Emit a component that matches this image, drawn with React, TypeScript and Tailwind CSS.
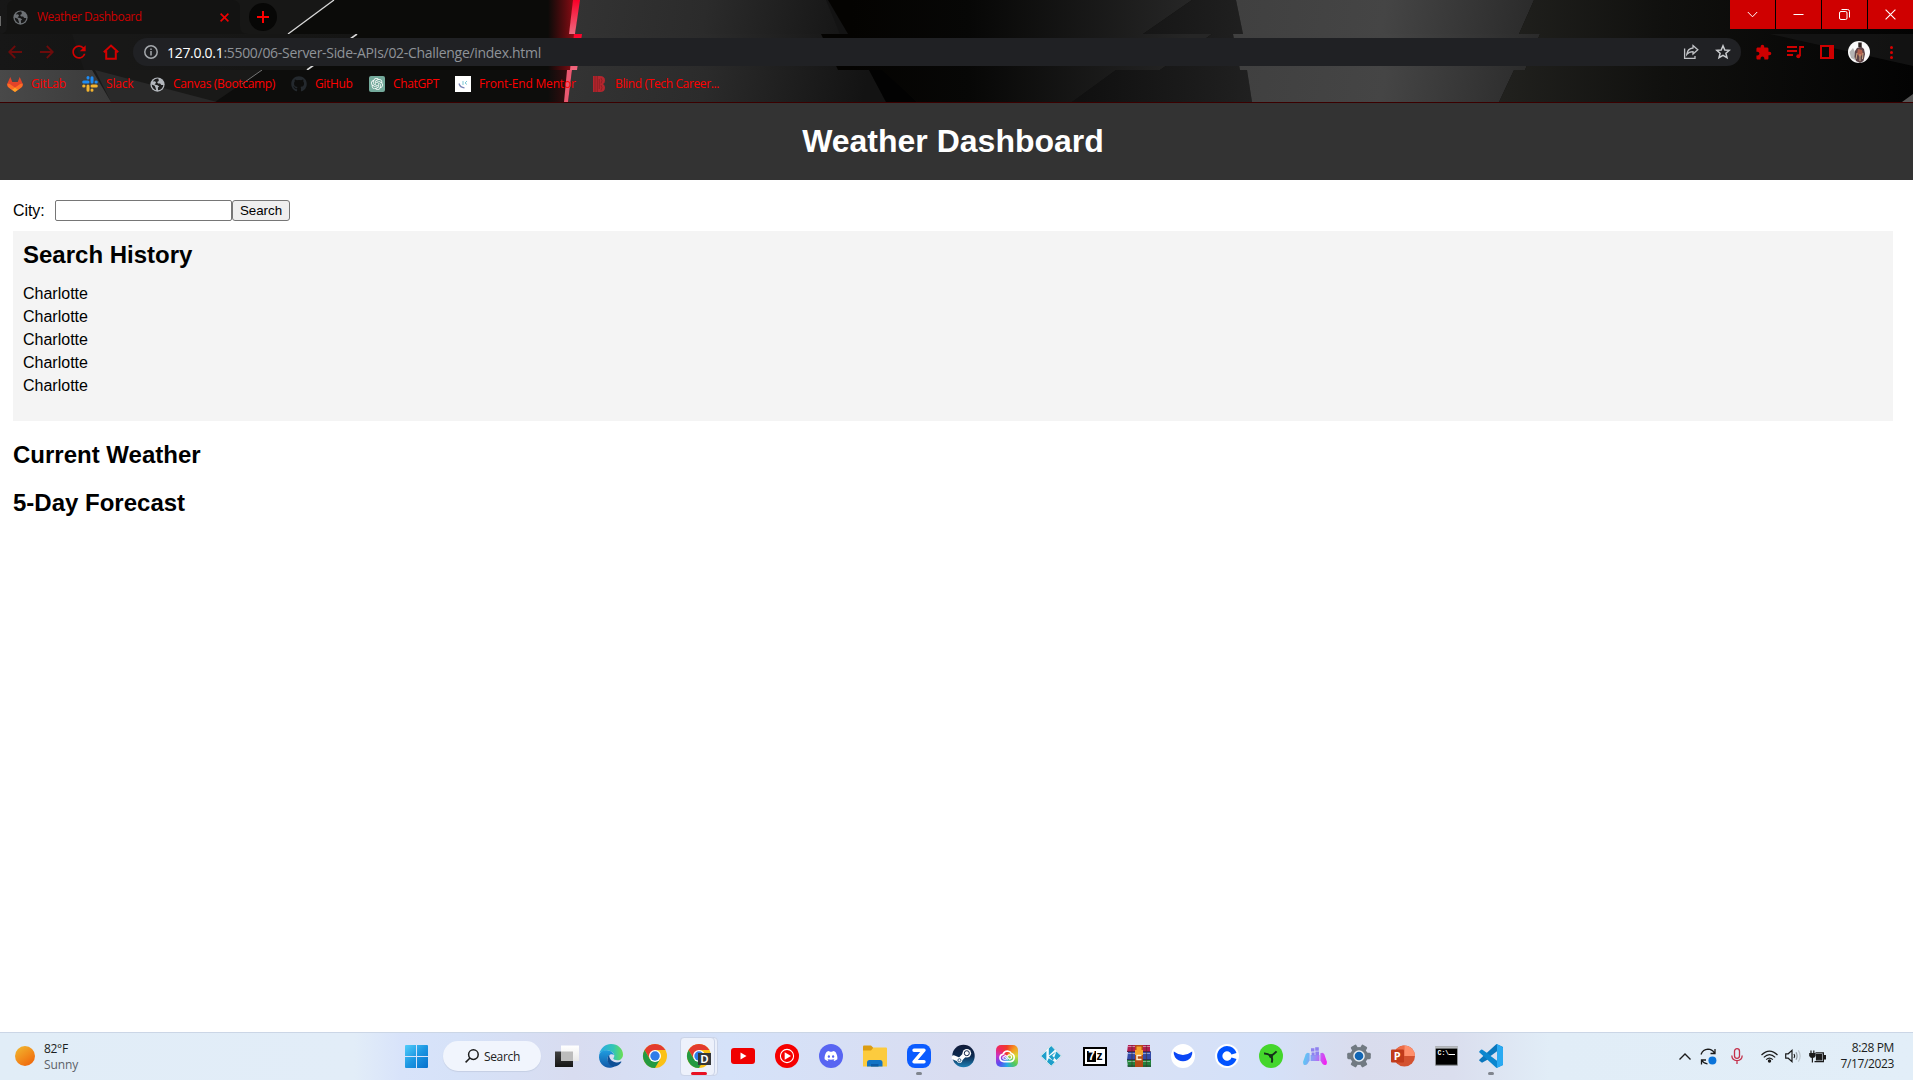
import React from 'react';
import { FaDiscord, FaGithub } from 'react-icons/fa';
import { SiOpenai } from 'react-icons/si';
import { MdExtension, MdRefresh } from 'react-icons/md';

const SEGOE = "font-['Open_Sans','Noto_Sans',sans-serif]";

function Art({ h, children }: { h: number; children: React.ReactNode }) {
  return (
    <svg className="absolute inset-0 h-full w-full" viewBox={`0 0 1913 ${h}`} preserveAspectRatio="none">
      {children}
    </svg>
  );
}

function Gradients() {
  return (
    <svg className="absolute h-0 w-0">
      <defs>
        <linearGradient id="base" gradientUnits="userSpaceOnUse" x1="0" y1="0" x2="1913" y2="0">
          <stop offset="0" stopColor="#171717" />
          <stop offset=".13" stopColor="#11110f" />
          <stop offset=".29" stopColor="#0b0b09" />
        </linearGradient>
        <linearGradient id="glow" gradientUnits="userSpaceOnUse" x1="548" y1="0" x2="574" y2="0">
          <stop offset="0" stopColor="#7a0a10" stopOpacity="0" />
          <stop offset="1" stopColor="#8c0c14" />
        </linearGradient>
        <linearGradient id="streak" x1="0" y1="0" x2="0" y2="1">
          <stop offset="0" stopColor="#fa0028" />
          <stop offset="1" stopColor="#ee6a80" />
        </linearGradient>
        <linearGradient id="mid" gradientUnits="userSpaceOnUse" x1="575" y1="0" x2="860" y2="50">
          <stop offset="0" stopColor="#333333" />
          <stop offset=".45" stopColor="#2b2b2b" />
          <stop offset="1" stopColor="#131313" />
        </linearGradient>
        <linearGradient id="facet" gradientUnits="userSpaceOnUse" x1="850" y1="0" x2="1190" y2="0">
          <stop offset="0" stopColor="#040301" />
          <stop offset=".35" stopColor="#070706" />
          <stop offset="1" stopColor="#262626" />
        </linearGradient>
        <linearGradient id="dark" gradientUnits="userSpaceOnUse" x1="1080" y1="0" x2="1250" y2="0">
          <stop offset="0" stopColor="#101010" />
          <stop offset="1" stopColor="#202020" />
        </linearGradient>
        <linearGradient id="gray" gradientUnits="userSpaceOnUse" x1="1236" y1="0" x2="1530" y2="40">
          <stop offset="0" stopColor="#404040" />
          <stop offset=".5" stopColor="#454545" />
          <stop offset="1" stopColor="#2b2b2b" />
        </linearGradient>
        <linearGradient id="right" gradientUnits="userSpaceOnUse" x1="1500" y1="0" x2="1913" y2="0">
          <stop offset="0" stopColor="#21211e" />
          <stop offset=".4" stopColor="#10100e" />
          <stop offset="1" stopColor="#030303" />
        </linearGradient>
        <linearGradient id="left" gradientUnits="userSpaceOnUse" x1="0" y1="0" x2="111" y2="0">
          <stop offset="0" stopColor="#494949" />
          <stop offset="1" stopColor="#3a3a3a" />
        </linearGradient>
      </defs>
    </svg>
  );
}

function TabArt() {
  return (
    <Art h={34}>
      <path fill="url(#base)" d="M0 0H1913V34H0z" />
      <path fill="#171716" d="M72 0H334L288 34H84z" />
      <path fill="#131312" d="M0 34Q7 34 7 26V8Q7 0 15 0H232Q240 0 240 8V26Q240 34 248 34z" opacity=".85" />
      <path fill="#0b0b09" d="M334 0H580V34H288z" />
      <path fill="#6b6b6b" d="M0 16h1v10H0z" />
      <path stroke="#d8d8d8" strokeWidth="1.3" d="M334 0L288 34" />
      <path fill="url(#glow)" d="M548 0H575L571 34H548z" />
      <path fill="url(#mid)" d="M579 0H830L846 34H575z" />
      <path fill="#131313" d="M826 0H840L862 34H840z" />
      <path fill="url(#streak)" d="M573 0H580L575 34H569z" />
      <path fill="url(#facet)" d="M828 0H1192L1143 34H848z" />
      <path fill="url(#dark)" d="M1192 0H1236L1243 34H1143z" />
      <path fill="url(#gray)" d="M1236 0H1534L1519 34H1243z" />
      <path fill="url(#right)" d="M1534 0H1913V34H1519z" />
    </Art>
  );
}

function ToolbarArt() {
  return (
    <Art h={36}>
      <path fill="url(#base)" d="M0 0H1913V36H0z" />
      <path fill="#1c1c1b" d="M72 0H356L307 36H84z" opacity=".5" />
      <path fill="#0b0b09" d="M356 0H580V36H307z" />
      <path stroke="#d8d8d8" strokeWidth="1.6" d="M357 0L307 36" />
      <path fill="url(#glow)" d="M548 0H577V36H548z" />
      <path fill="url(#mid)" d="M580 0H829L850 36H576z" />
      <path fill="url(#streak)" d="M574 0H582L577 36H570z" />
      <path fill="url(#facet)" d="M821 0H1212L1160 36H838z" />
      <path fill="url(#dark)" d="M1212 0H1233L1240 36H1160z" />
      <path fill="url(#gray)" d="M1233 0H1540L1525 36H1240z" />
      <path fill="url(#right)" d="M1540 0H1913V36H1525z" />
      <path fill="#161616" d="M1770 0H1913V32z" opacity=".8" />
    </Art>
  );
}

function BookmarkArt() {
  return (
    <Art h={32}>
      <path fill="#0d0d0c" d="M0 0H1913V32H0z" />
      <path fill="#191918" d="M90 0H262L215 32H110z" />
      <path fill="#292929" d="M95 0L217 32H111z" />
      <path fill="url(#left)" d="M0 0H92L111 32H0z" />
      <path stroke="#777" d="M262 0L242 14" />
      <path fill="url(#glow)" d="M548 0H569L565 32H548z" opacity=".45" />
      <path fill="url(#mid)" d="M572 0H869L886 32H568z" />
      <path fill="#ea5870" d="M567 0H572L568 32H564z" />
      <path fill="#020202" d="M869 0H884L917 32H886z" />
      <path fill="url(#facet)" d="M882 0H1116L1072 32H917z" />
      <path fill="url(#dark)" d="M1116 0H1247L1252 32H1072z" />
      <path fill="url(#gray)" d="M1247 0H1514L1499 32H1252z" />
      <path fill="url(#right)" d="M1514 0H1913V32H1499z" />
      <path fill="#555" d="M1902 32L1913 24V32z" />
    </Art>
  );
}

function Globe({ color, hole }: { color: string; hole: string }) {
  return (
    <svg viewBox="0 0 16 16" className="h-[15px] w-[15px]">
      <circle cx="8" cy="8" r="7.6" fill={color} />
      <path fill={hole} d="M9 1.8C7 1.4 4.2 2.5 3 4.8L5.4 4.5 6.5 6 4.8 8 8 8.8 9.8 10 8.4 11.3 8.6 14.2C12 13.8 14 11.3 14.2 8.6L12 8.4 10.8 6.8 8.6 7 7.6 5.2 9.4 4.2z" />
      <path fill={hole} d="M1.8 8L5 9.4 6 11.6 6.6 14C4 13.4 2 11 1.8 8z" />
    </svg>
  );
}

function TabStrip() {
  const btn = 'flex h-[29px] w-[45px] items-center justify-center bg-[#cf0000] pr-px';
  const ic = 'h-[11px] w-[11px] fill-none stroke-white';
  return (
    <div className="relative h-[34px] overflow-hidden">
      <TabArt />
      <div className="relative flex h-full">
        <div className="flex h-full w-[240px] items-center pl-[13px] pr-[10px]">
          <Globe color="#6d7175" hole="#171717" />
          <span className="ml-[9px] flex-1 whitespace-nowrap text-[12px] leading-4 tracking-[-0.48px] text-[#cc0000]">Weather Dashboard</span>
          <svg viewBox="0 0 9 9" className="mr-px h-[9px] w-[9px] stroke-[#f00000]" strokeWidth="1.6">
            <path d="M.6 .6L8.4 8.4M8.4 .6L.6 8.4" />
          </svg>
        </div>
        <div className="ml-[9px] mt-[3px] flex h-7 w-7 items-center justify-center rounded-full bg-[#070706]">
          <svg viewBox="0 0 12 12" className="h-3 w-3 stroke-[#ff0000]" strokeWidth="2">
            <path d="M6 0V12M0 6H12" />
          </svg>
        </div>
        <div className="ml-auto flex h-[29px] gap-px bg-black">
          <div className={btn}><svg viewBox="0 0 11 11" className={ic}><path d="M.8 3L5.5 7.8 10.2 3" /></svg></div>
          <div className={btn}><svg viewBox="0 0 11 11" className={ic}><path d="M.5 5.5H10.5" /></svg></div>
          <div className={btn}>
            <svg viewBox="0 0 11 11" className={ic}>
              <rect x=".5" y="2.5" width="7.5" height="8" rx="1.5" />
              <path d="M2.5 .5H8.5Q10.5 .5 10.5 2.5V8.5" />
            </svg>
          </div>
          <div className={btn}><svg viewBox="0 0 11 11" className={ic} strokeWidth="1.1"><path d="M.6 .6L10.4 10.4M10.4 .6L.6 10.4" /></svg></div>
        </div>
      </div>
    </div>
  );
}

function Toolbar() {
  return (
    <div className="relative h-9">
      <ToolbarArt />
      <div className="relative flex h-full items-center">
        <div className="flex w-[133px] items-center gap-[18px] pl-2">
          <svg viewBox="0 0 14 14" className="h-[14px] w-[14px] fill-none stroke-[#6d0b0b]" strokeWidth="1.8"><path d="M14 7H1.5M7.2 1L1.2 7 7.2 13" /></svg>
          <svg viewBox="0 0 14 14" className="h-[14px] w-[14px] fill-none stroke-[#6d0b0b]" strokeWidth="1.8"><path d="M0 7H12.5M6.8 1L12.8 7 6.8 13" /></svg>
          <MdRefresh className="-mx-[3px] h-5 w-5 text-[#d40000]" />
          <svg viewBox="0 0 16 16" className="-mx-px h-4 w-4 fill-none stroke-[#d40000]" strokeWidth="2"><path d="M.8 8.2L8 1.6 15.2 8.2M3.2 7V14.8H12.8V7" /></svg>
        </div>
        <div className="flex h-7 w-[1608px] items-center rounded-full bg-[#202124] pl-[11px] pr-[10px]">
          <svg viewBox="0 0 14 14" className="h-[14px] w-[14px] fill-none stroke-[#a4a8ac]" strokeWidth="1.5"><circle cx="7" cy="7" r="6.2" /><path d="M7 6V10.4M7 3.4V5" /></svg>
          <span className="ml-[9px] flex-1 whitespace-nowrap pt-px text-[14px] leading-5 tracking-[-0.3px] text-[#8f9398]">
            <span className="text-white">127.0.0.1</span>:5500/06-Server-Side-APIs/02-Challenge/index.html
          </span>
          <svg viewBox="0 0 16 16" className="mr-4 h-4 w-4 fill-none stroke-[#c0c2c5]" strokeWidth="1.3">
            <path d="M1.6 4.5V14.4H12V12M10 1.6L14.8 5.8 10 10V7.6C7.5 7.6 5.4 8.2 3.8 10.4 4.2 6.8 6.4 4.4 10 4z" />
          </svg>
          <svg viewBox="0 0 16 16" className="h-4 w-4 fill-none stroke-[#c9cbce]" strokeWidth="1.5">
            <path d="M8 1.8L9.8 6 14.3 6.3 10.9 9.2 12 13.7 8 11.3 4 13.7 5.1 9.2 1.7 6.3 6.2 6z" />
          </svg>
        </div>
        <MdExtension className="ml-[14px] h-[17px] w-[17px] text-[#cf0000]" />
        <svg viewBox="0 0 17 14" className="ml-[15px] h-[14px] w-[17px] fill-none stroke-[#cf0000]" strokeWidth="1.8">
          <path d="M0 2H10M0 6H10M0 10H6M13 11V2H17" />
          <circle cx="11.3" cy="11.2" r="2" fill="#cf0000" stroke="none" />
        </svg>
        <div className="ml-4 h-[14px] w-[14px] border-2 border-r-[5px] border-[#cf0000]" />
        <svg viewBox="0 0 22 22" className="ml-[14px] h-[22px] w-[22px]">
          <circle cx="11" cy="11" r="11" fill="#fafafa" />
          <path fill="#b5b5b5" d="M1.5 11L5 7 8 13 7 19 3 17z" />
          <path fill="#5d4347" d="M9 7L13 5.5 16 8 17 13 15.5 20 12 22 8 20 6.5 16 7 10z" />
          <path fill="#b0604c" d="M10 8L14 9 15 13 12 16 9 13z" />
          <path stroke="#d8b88f" strokeWidth=".9" d="M9 12L8 18M12 13V20M15 12L14.5 18" />
          <path fill="#2b2220" d="M10.3 1.5h3.4v4.5h-3.4z" />
        </svg>
        <div className="ml-5 flex flex-col gap-[2px]">
          <i className="h-[3px] w-[3px] rounded-full bg-[#d80000]" />
          <i className="h-[3px] w-[3px] rounded-full bg-[#d80000]" />
          <i className="h-[3px] w-[3px] rounded-full bg-[#d80000]" />
        </div>
      </div>
    </div>
  );
}

function GitLab() {
  return (
    <svg viewBox="0 0 16 16" className="h-4 w-4">
      <path fill="#e24329" d="M3.3 1L5.3 6H10.7L12.7 1 15.6 7.6Q16.3 10 14 11.7L8 16 2 11.7Q-.3 10 .4 7.6z" />
      <path fill="#fc6d26" d="M.5 7.4Q3 7.6 5 9.4L11.2 13.8 8 16 2 11.7Q-.3 10 .5 7.4zM15.5 7.4Q13 7.6 11 9.4L4.8 13.8 8 16 14 11.7Q16.3 10 15.5 7.4z" />
      <path fill="#fca326" d="M8 11.6L11.2 13.8 8 16 4.8 13.8z" />
    </svg>
  );
}

function Slack() {
  return (
    <svg viewBox="0 0 16 16" className="h-4 w-4 fill-none" strokeWidth="3" strokeLinecap="round">
      <path stroke="#1e8cf5" d="M6 1.6V2M1.7 6H6M10 1.8V6M14 6H14.3" />
      <path stroke="#f5b52e" d="M1.7 10H2M6 10V14.2M10 10H14.3M10 14V14.3" />
    </svg>
  );
}

function Mentor() {
  return (
    <svg viewBox="0 0 16 16" className="h-4 w-4 bg-white fill-none">
      <path stroke="#7b86b8" strokeWidth="1.3" d="M4 7.5Q5 11.5 9.5 11.8" />
      <path stroke="#7fc9d6" d="M8 5V9M12 5L10 7 12 8.5" />
    </svg>
  );
}

function Blind() {
  return (
    <svg viewBox="0 0 12 16" className="h-4 w-3">
      <path fill="#b3262e" d="M0 0H7Q12 0 12 4.5 12 7 10 8 12 9 12 11.5 12 16 7 16H0z" />
      <path stroke="#6b161b" strokeWidth=".5" fill="none" d="M2 0V16M4.3 0V16M6.3 3V13M8 2Q10 4.5 8 7.5M8 9Q10 11.5 8 14.5" />
    </svg>
  );
}

function BookmarkBar() {
  const items = [
    { icon: <GitLab />, label: 'GitLab', w: 'w-[75px] gap-2', t: 'tracking-[-0.25px]' },
    { icon: <Slack />, label: 'Slack', w: 'w-[68px] gap-2', t: 'tracking-[-0.2px]' },
    { icon: <Globe color="#b4b8bd" hole="#1d1d1d" />, label: 'Canvas (Bootcamp)', w: 'w-[141px] gap-2', t: 'tracking-[-0.32px]' },
    { icon: <FaGithub className="h-4 w-4 text-[#24292e]" />, label: 'GitHub', w: 'w-[78px] gap-2', t: 'tracking-[-0.35px]' },
    { icon: <div className="flex h-4 w-4 items-center justify-center rounded-[2px] bg-[#74aa9c]"><SiOpenai className="h-3 w-3 text-white" /></div>, label: 'ChatGPT', w: 'w-[86px] gap-2', t: 'tracking-[-0.35px]' },
    { icon: <Mentor />, label: 'Front-End Mentor', w: 'w-[138px] gap-2', t: 'tracking-[-0.18px]' },
    { icon: <Blind />, label: 'Blind (Tech Career...', w: 'w-[140px] gap-[10px]', t: 'tracking-[-0.36px]' },
  ];
  return (
    <div className="relative h-8">
      <BookmarkArt />
      <div className="relative flex h-[28px] items-center pl-[7px]">
        {items.map((b) => (
          <div key={b.label} className={`flex shrink-0 items-center ${b.w}`}>
            {b.icon}
            <span className={`whitespace-nowrap text-[12px] leading-4 text-[#ff0000] ${b.t}`}>{b.label}</span>
          </div>
        ))}
      </div>
    </div>
  );
}

function Page() {
  const h2 = 'text-[24px] font-bold leading-[27px]';
  return (
    <main className="flex-1 bg-white font-['Liberation_Sans',Arial,sans-serif] text-black">
      <header className="h-[77px] bg-[#333333] pr-[7px] pt-5 text-center">
        <h1 className="text-[32px] font-bold leading-[36px] text-white">Weather Dashboard</h1>
      </header>
      <section className="pl-[13px] pr-5 pt-5">
        <form className="flex h-[21px] items-center" onSubmit={(e) => e.preventDefault()}>
          <label htmlFor="city" className="w-[42px] text-[16px] leading-[18px] tracking-[-0.1px]">City:</label>
          <input id="city" className="h-[21px] w-[177px] rounded-[2px] border border-[#767676] bg-white px-1 text-[13px]" />
          <button className="h-[21px] w-[58px] rounded-[3px] border border-[#767676] bg-[#efefef] text-[13.33px] leading-[19px]">Search</button>
        </form>
        <div className="mt-[10px] h-[190px] bg-[#f4f4f4] p-[10px]">
          <h2 className={h2}>Search History</h2>
          <ul className="mt-[17px] flex flex-col gap-[5px] text-[16px] leading-[18px]">
            {[0, 1, 2, 3, 4].map((i) => <li key={i}>Charlotte</li>)}
          </ul>
        </div>
        <h2 className={`mt-5 ${h2}`}>Current Weather</h2>
        <h2 className={`mt-[21px] ${h2}`}>5-Day Forecast</h2>
      </section>
    </main>
  );
}

const S = 'h-6 w-6 overflow-visible';

function Chrome({ badge }: { badge?: boolean }) {
  return (
    <div className="relative h-6 w-6">
      <svg viewBox="0 0 24 24" className={S}>
        <circle cx="12" cy="12" r="12" fill="#fbc116" />
        <path fill="#e33b2e" d="M1.6 6A12 12 0 0 1 22.4 6H12L7 15z" />
        <path fill="#249a41" d="M1.6 6A12 12 0 0 0 12 24L17.2 15 12 12 6.8 15z" />
        <circle cx="12" cy="12" r="6" fill="#fff" />
        <circle cx="12" cy="12" r="4.7" fill="#2f7de9" />
      </svg>
      {badge && <div className="absolute left-[11px] top-[9px] flex h-3 w-[13px] items-center justify-center bg-[#343638] font-['Liberation_Sans',sans-serif] text-[11px] font-bold leading-3 text-white">D</div>}
    </div>
  );
}

const Start = () => (
  <svg viewBox="0 0 23 23" className="mr-px h-[23px] w-[23px]">
    <defs><linearGradient id="win" x1="0" y1="0" x2="23" y2="23" gradientUnits="userSpaceOnUse"><stop stopColor="#50cdfb" /><stop offset=".5" stopColor="#1c96e2" /><stop offset="1" stopColor="#0670cc" /></linearGradient></defs>
    <path fill="url(#win)" d="M1 0H11V11H0V1Q0 0 1 0zM12 0H22Q23 0 23 1V11H12zM0 12H11V23H1Q0 23 0 22zM12 12H23V22Q23 23 22 23H12z" />
  </svg>
);
const TaskView = () => (
  <svg viewBox="0 0 24 24" className={S}>
    <defs>
      <linearGradient id="tv1" x2="0" y2="1"><stop stopColor="#404040" /><stop offset="1" stopColor="#161616" /></linearGradient>
      <linearGradient id="tv2" x2="0" y2="1"><stop stopColor="#ffffff" /><stop offset="1" stopColor="#e9e9e9" /></linearGradient>
    </defs>
    <path fill="url(#tv1)" d="M0 7.5H18V23H0z" />
    <path fill="url(#tv2)" d="M6 1.5H24V17H6z" />
    <path fill="#bcbcbc" d="M6 7.5H18V17H6z" />
  </svg>
);
const Edge = () => (
  <svg viewBox="0 0 24 24" className={S}>
    <defs>
      <linearGradient id="ed1"><stop stopColor="#29a8e6" /><stop offset=".6" stopColor="#32c6b4" /><stop offset="1" stopColor="#6bdf50" /></linearGradient>
      <linearGradient id="ed2" x2="0" y2="1"><stop stopColor="#1f9de0" /><stop offset="1" stopColor="#1159a8" /></linearGradient>
    </defs>
    <path fill="url(#ed1)" d="M.3 10C1.5 4 6.5 0 12 0 19 0 24 5 24 10.5 24 14 21.5 16.3 18.5 16.3 16 16.3 14.3 15.4 14.3 14.6 14.3 14 15.3 13.4 15.3 11.6 15 8.5 11.5 6.5 8 6.5 4.5 6.5 1.5 8 .3 10z" />
    <path fill="url(#ed2)" d="M.2 10.5C1.5 7.4 5 6 8 6.3 12 6.6 14.6 9 15 11 11.5 9 8 12 8.5 15.8 9 19.5 12 22 15.6 22.2 8 27 -1.5 20 .2 10.5z" />
    <path fill="#0d4f96" d="M10.3 10.6C7 14 8 21 14 22.7 18 22.8 21 20.2 22.4 18 22.6 17.5 22.2 17.2 21.7 17.5 16.5 20 9.5 17 10.3 10.6z" />
  </svg>
);
const YouTube = () => (
  <svg viewBox="0 0 24 16" className="h-4 w-6"><rect width="24" height="16" rx="3" fill="#f00000" /><path fill="#fff" d="M9.5 4.5L15.5 8 9.5 11.5z" /></svg>
);
const YTMusic = () => (
  <svg viewBox="0 0 24 24" className={S}><circle cx="12" cy="12" r="12" fill="#f60000" /><circle cx="12" cy="12" r="6.6" fill="none" stroke="#fff" strokeWidth="1.1" /><path fill="#fff" d="M9.7 8.3L16 12 9.7 15.7z" /></svg>
);
const Discord = () => (
  <div className="flex h-6 w-6 items-center justify-center rounded-full bg-[#5865f2]"><FaDiscord className="h-[14px] w-[14px] text-white" /></div>
);
const Folder = () => (
  <svg viewBox="0 0 24 24" className={S}>
    <path fill="#dc9d12" d="M0 2.5Q0 1.5 1 1.5H8L10.5 4 9 8H0z" />
    <path fill="#fccb3e" d="M0 6.5H8L10.5 3.5H23Q24 3.5 24 4.5V22.5H0z" />
    <path fill="#1474c4" d="M4 22.5V18.5Q4 16 6.5 16H17Q19.5 16 19.5 18.5V22.5z" />
    <path fill="#0d5ca6" d="M8 20H15.5V22.5H8z" />
  </svg>
);
const Zoom = () => (
  <svg viewBox="0 0 24 24" className={S}><rect width="24" height="24" rx="8" fill="#0b5cff" /><path fill="none" stroke="#fff" strokeWidth="3.4" strokeLinejoin="round" strokeLinecap="round" d="M7 6.2H17L7 17.8H17" /></svg>
);
const Steam = () => (
  <svg viewBox="0 0 24 24" className={S}>
    <defs><linearGradient id="stm" x2="0" y2="1"><stop stopColor="#101a38" /><stop offset=".5" stopColor="#0d2a50" /><stop offset="1" stopColor="#1c7fb5" /></linearGradient></defs>
    <circle cx="12.5" cy="12" r="11.2" fill="url(#stm)" />
    <path stroke="#fff" strokeWidth="4.4" strokeLinecap="round" d="M2.8 13.5L8.6 16 L14 10.5" fill="none" />
    <circle cx="8.6" cy="16.2" r="2.6" fill="#fff" /><circle cx="8.4" cy="16.2" r="1.5" fill="none" stroke="#17406a" strokeWidth=".8" />
    <circle cx="15.8" cy="9.2" r="4.3" fill="#fff" /><circle cx="15.8" cy="9.2" r="2.5" fill="#fff" stroke="#13274a" strokeWidth="1" />
  </svg>
);
const Creative = () => (
  <div className="flex h-[22px] w-[22px] items-center justify-center rounded-[5px] bg-[conic-gradient(from_45deg,#f59a20,#d6d93a,#54c95a,#25a9e6,#5a4df0,#c832c8,#f0285a,#f03c28,#f59a20)]">
    <svg viewBox="0 0 16 13" className="h-[13px] w-4 fill-none stroke-white" strokeWidth="1.6" strokeLinecap="round">
      <path d="M4 4.2Q5.2 1 8.6 1 11.4 1.2 12.4 3.6 15.2 4.4 15.2 7.6 15 11 11.6 11.6H5Q1.2 11.4 .9 7.9 .9 4.6 4 4.2" />
      <path d="M8.4 9.2L6.4 7.2Q5 6 4 7.2 3.4 9 5 9.2H7M8.4 6L10 4.8Q12.4 4.6 12.6 7 12.4 9.2 10.4 9.2L8 6.6Q7 5.2 5.6 5" strokeWidth="1.1" />
    </svg>
  </div>
);
const Kodi = () => (
  <svg viewBox="0 0 24 24" className={S}>
    <path fill="#f4fafc" stroke="#b9cbd5" strokeWidth=".5" d="M12 .8L22.8 11.8 12 23 1.2 11.8z" />
    <path fill="#1f9fcb" d="M12.2 2L15.8 5.7 9.8 11.4V4.4zM7.4 7V17L2.2 12zM9.8 12.6L14 16.8 17.4 7.4 21.8 11.8 17.5 16 13.2 11.8 17.4 7.4zM9.8 14.2L15.8 18 12.2 21.8 8 17.8z" />
  </svg>
);
const SevenZip = () => (
  <div className="flex h-[19px] w-6 items-stretch border-2 border-black bg-white p-[2px] font-['Liberation_Sans',sans-serif] font-bold">
    <span className="flex w-[9px] items-center justify-center bg-black text-[12px] leading-none text-white">7</span>
    <span className="flex flex-1 items-end justify-center text-[12px] leading-[11px] text-black">z</span>
  </div>
);
const WinRar = () => (
  <svg viewBox="0 0 24 24" className={S}>
    <path fill="#b31c50" d="M1 1H23V8H0z" /><path fill="#324aa8" d="M1 8H24V16H0z" /><path fill="#23823c" d="M0 16H24V23H1z" />
    <path stroke="#fff" opacity=".45" d="M1 2.5H23M1 9.5H23M1 17.5H23" /><path stroke="#271a38" opacity=".6" d="M0 7.5H24M0 15.5H24M0 22H24" />
    <path fill="#b54a16" d="M8 1H16V23H8z" /><path fill="#f5a52b" d="M9.5 2.5H14.5V6H16V11H8V6H9.5z" />
    <path fill="none" stroke="#fff2cf" strokeWidth="1.5" d="M14.5 11.5H10V15.5H14.5" />
    <path stroke="#4a3024" strokeWidth="1.2" d="M5 1V23M19.5 1V23" opacity=".5" />
  </svg>
);
const Crescent = () => (
  <svg viewBox="0 0 24 24" className={S}><circle cx="12" cy="12" r="12" fill="#fff" /><path fill="#0a46f5" d="M2.8 7.5Q12 14.5 21.2 7.5 21.8 10.5 20 13.2 17 17.2 12 17.2 7 17.2 4 13.2 2.2 10.5 2.8 7.5z" /></svg>
);
const Coinbase = () => (
  <svg viewBox="0 0 24 24" className={S}><circle cx="12" cy="12" r="12" fill="#fff" /><path fill="none" stroke="#0052ff" strokeWidth="5.2" d="M19 9.8A7.3 7.3 0 1 0 19 14.2" /></svg>
);
const Razer = () => (
  <svg viewBox="0 0 24 24" className={S}><circle cx="12" cy="12" r="12" fill="#44d62c" /><path fill="none" stroke="#15301a" strokeWidth="2" d="M5 9.6Q8.5 9.4 12 12 14.5 10.5 17.6 7.4M12 12Q14 15.2 12.6 18.6" /><circle cx="12" cy="12" r="2" fill="#15301a" /></svg>
);
const Pad = () => (
  <svg viewBox="0 0 24 24" className={S}>
    <defs><linearGradient id="pad" gradientUnits="userSpaceOnUse" x1="0" y1="12" x2="24" y2="18"><stop stopColor="#55d0f5" /><stop offset=".5" stopColor="#9c8cf5" /><stop offset="1" stopColor="#fa18f0" /></linearGradient></defs>
    <path fill="url(#pad)" d="M2.6 10.5Q3.8 7.6 6.6 9.2V16.6L4.4 20Q2.4 22 .6 20.4 -.2 19.4 .2 17.6z" />
    <path fill="url(#pad)" d="M21.4 10.5Q20.2 7.6 17.4 9.2V16.6L19.6 20Q21.6 22 23.4 20.4 24.2 19.4 23.8 17.6z" />
    <path fill="url(#pad)" d="M7.6 11H16.4V17H7.6z" />
    <path fill="#8f80ef" d="M8 4.2H11.4V7.6H8zM12.2 3.2H15.8V6.8H12.2zM8.6 8.4H11.6V11.4H8.6zM12.4 7.6H16V11.2H12.4z" />
  </svg>
);
const Gear = () => (
  <svg viewBox="0 0 24 24" className={S}>
    <g fill="#717a82">
      <circle cx="12" cy="12" r="9" />
      {[0, 60, 120, 180, 240, 300].map((a) => <rect key={a} x="8.8" y=".2" width="6.4" height="6" rx="1.4" transform={`rotate(${a + 30} 12 12)`} />)}
    </g>
    <circle cx="12" cy="12" r="5.8" fill="#e8eef3" /><circle cx="12" cy="12" r="4.3" fill="#1266b4" />
  </svg>
);
const PowerPoint = () => (
  <svg viewBox="0 0 24 24" className={S}>
    <circle cx="13.4" cy="12" r="10.6" fill="#d35230" /><path fill="#ed6c47" d="M13.4 1.4V12H2.8A10.6 10.6 0 0 1 13.4 1.4z" /><path fill="#ff8f6b" d="M13.4 1.4A10.6 10.6 0 0 1 24 12H13.4z" />
    <rect y="5.5" width="13" height="13" rx="1" fill="#c13b1b" />
    <text x="2.8" y="16" fill="#fff" fontSize="11" fontWeight="700" fontFamily="Open Sans">P</text>
  </svg>
);
const Cmd = () => (
  <svg viewBox="0 0 24 24" className={S}>
    <path fill="#000" stroke="#8b9095" d="M.5 2.8H22.5V21.2H.5z" /><path fill="#b9bcc0" d="M0 2.3H23V4.6H0z" />
    <text x="2.5" y="11" fill="#fff" fontSize="6.5" fontWeight="700" fontFamily="Liberation Mono">C:\</text><path stroke="#fff" d="M14 10.5H20" />
  </svg>
);
const Code = () => (
  <svg viewBox="0 0 24 24" className={S}>
    <path fill="#0a77bd" d="M17.5 0L24 3V7L3 18.8 .4 16.8Q-.2 16 .5 15.4z" />
    <path fill="#0b87cf" d="M.5 8.6Q-.2 8 .4 7.2L2 5.7Q2.6 5.2 3.4 5.7L24 20V21L17.5 24z" />
    <path fill="#2aaaf2" d="M17.5 0L23 2.5Q24 3 24 4V20Q24 21 23 21.5L17.5 24 Q18 23.5 18 22V2Q18 .5 17.5 0z" />
    <path fill="#d9dff0" d="M18 7.2V16.8L11.6 12z" />
  </svg>
);

function Cell({ children }: { children: React.ReactNode }) {
  return <div className="flex h-[46px] w-11 shrink-0 items-center justify-center">{children}</div>;
}

function Taskbar() {
  const icons = [Zoom, Steam, Creative, Kodi, SevenZip, WinRar, Crescent, Coinbase, Razer, Pad, Gear, PowerPoint, Cmd, Code];
  return (
    <footer className="flex h-12 border-t border-[#cbd6e6] bg-[linear-gradient(90deg,#e1edf7_0%,#e2edf8_18.5%,#d8e3fa_21%,#d6e2f8_24%,#d8dcf0_30%,#d5e2f9_38%,#d9ddf1_50%,#d8e1f6_60%,#d4e1f9_66%,#d9dced_71%,#dadeee_76%,#e1edf7_81%,#e2eef8_100%)]">
      <div className="flex h-[46px] w-[395px] items-center gap-[9px] pl-[15px]">
        <div className="h-5 w-5 rounded-full bg-[linear-gradient(145deg,#efbc32,#f28d1c_50%,#ee5d08)]" />
        <div className="mt-[2px] text-[12px] leading-4 tracking-[-0.3px]">
          <div className="text-[#1b1d20]">82°F</div>
          <div className="tracking-[-0.1px] text-[#5c6168]">Sunny</div>
        </div>
      </div>
      <Cell><Start /></Cell>
      <div className="ml-1 mt-2 flex h-[30px] w-[98px] items-center rounded-full bg-[#f1f5fd] pl-[22px] shadow-[0_1px_1px_#c5cfe4]">
        <svg viewBox="0 0 14 14" className="h-[14px] w-[14px] fill-none stroke-[#1d1d1d]" strokeWidth="1.5"><circle cx="8.4" cy="5.6" r="4.8" /><path d="M5 9L.6 13.4" /></svg>
        <span className="ml-[5px] pt-[2px] text-[12px] leading-4 tracking-[-0.35px] text-[#222]">Search</span>
      </div>
      <div className="ml-1 flex">
        <Cell><TaskView /></Cell>
        <Cell><Edge /></Cell>
        <Cell><Chrome /></Cell>
        <div className="relative">
          <div className="absolute left-[3px] top-1 h-[39px] w-[38px] rounded border border-[#cbd4e8] bg-[#eaeffa]" />
          <div className="absolute left-[3px] top-1 h-[39px] w-[35px] rounded border border-[#cbd4e8] bg-[#edf1fb]" />
          <div className="absolute left-[14px] top-[39px] z-10 h-[3px] w-4 rounded-full bg-[#e81123]" />
          <div className="relative"><Cell><Chrome badge /></Cell></div>
        </div>
        <Cell><YouTube /></Cell>
        <Cell><YTMusic /></Cell>
        <Cell><Discord /></Cell>
        <Cell><Folder /></Cell>
        {icons.map((Icon, i) => (
          <div key={i} className="relative">
            <Cell><Icon /></Cell>
            {(Icon === Zoom || Icon === Code) && <div className="absolute left-[19px] top-[39px] h-[3px] w-1.5 rounded-full bg-[#80858e]" />}
          </div>
        ))}
      </div>
      <div className="ml-auto flex h-[46px] items-center pr-[19px]">
        <svg viewBox="0 0 12 7" className="h-[7px] w-3 fill-none stroke-[#1b1b1b]" strokeWidth="1.4"><path d="M.5 6.4L6 1 11.5 6.4" /></svg>
        <svg viewBox="0 0 17 17" className="ml-[9px] h-[17px] w-[17px] fill-none stroke-[#1b1b1b]" strokeWidth="1.3">
          <path d="M1 6.5Q3 1.5 8 1.2 12 1.2 14.5 5M15 1V5.5H10.5M1.5 16.5V12H6M1.7 12.2Q3.5 15.5 7.5 15.8" />
          <circle cx="12.4" cy="12.6" r="4" fill="#0a74da" stroke="none" />
        </svg>
        <svg viewBox="0 0 12 16" className="ml-[14px] h-4 w-3 fill-none stroke-[#c4314b]" strokeWidth="1.3"><rect x="3.5" y=".7" width="5" height="9.6" rx="2.5" /><path d="M.8 7.5Q1 12.6 6 12.6 11 12.6 11.2 7.5M6 12.6V16" /></svg>
        <svg viewBox="0 0 17 13" className="ml-[18px] h-[13px] w-[17px] fill-none stroke-[#1b1b1b]" strokeWidth="1.2"><path d="M.5 5Q8.5 -3 16.5 5M2.8 7.4Q8.5 1.8 14.2 7.4M5.2 9.6Q8.5 6.6 11.8 9.6" /><circle cx="8.5" cy="11" r="1.7" fill="#1b1b1b" stroke="none" /></svg>
        <svg viewBox="0 0 17 14" className="ml-[7px] h-[14px] w-[17px] fill-none stroke-[#1b1b1b]" strokeWidth="1.2"><path d="M.7 4.8H3.2L7 1.4V12.6L3.2 9.2H.7zM9 5Q10.4 7 9 9" /><path stroke="#8d959c" d="M11 3.2Q13.2 7 11 10.8" /><path stroke="#bcc5cd" d="M13.3 1.3Q17 7 13.3 12.7" /></svg>
        <svg viewBox="0 0 17 13" className="ml-[7px] h-[13px] w-[17px] fill-none stroke-[#1b1b1b]" strokeWidth="1.2"><path d="M6.5 2.8H14.4V11.6H5.5" /><path fill="#1b1b1b" d="M7.5 4.6H12.7V9.8H7.5zM.8 3.5H6V5.8Q5.5 7.5 3.4 7.5 1.3 7.5 .8 5.8zM15.3 5.5H16.4V8.8H15.3z" /><path d="M2 .5V3M4.8 .5V3M3.4 7V12.5" /></svg>
        <div className="ml-[13px] w-[55px] whitespace-nowrap text-right text-[12px] leading-4 tracking-[-0.36px] text-[#1b1d20]">
          <div>8:28 PM</div>
          <div>7/17/2023</div>
        </div>
      </div>
    </footer>
  );
}

export default function App() {
  return (
    <div className={`flex h-[1080px] w-[1913px] flex-col overflow-hidden bg-white ${SEGOE}`}>
      <Gradients />
      <TabStrip />
      <Toolbar />
      <BookmarkBar />
      <div className="h-px bg-[#3a0000]" />
      <Page />
      <Taskbar />
    </div>
  );
}
